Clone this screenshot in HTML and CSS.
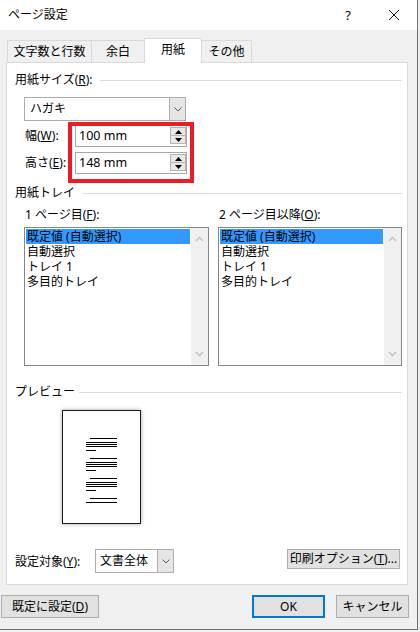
FILE: index.html
```html
<!DOCTYPE html>
<html lang="ja">
<head>
<meta charset="utf-8">
<title>ページ設定</title>
<link rel="stylesheet" href="styles.css">
</head>
<body>
<div class="dialog">
  <div class="titlebar">
    <span class="title">ページ設定</span>
    <span class="tb-btn help">?</span>
    <span class="tb-btn close"><svg width="12" height="12" viewBox="0 0 12 12"><path d="M1 1L11 11M11 1L1 11" stroke="#111" stroke-width="1" fill="none"/></svg></span>
  </div>

  <div class="tabs">
    <div class="tab t1">文字数と行数</div>
    <div class="tab t2">余白</div>
    <div class="tab t3 active">用紙</div>
    <div class="tab t4">その他</div>
  </div>

  <div class="panel">
    <div class="group-head"><span>用紙サイズ(<u>R</u>):</span><i class="rule"></i></div>
    <div class="indent">
      <div class="combo size-combo">
        <span class="combo-text">ハガキ</span>
        <span class="combo-btn"><svg width="8" height="5" viewBox="0 0 8 5"><path d="M0.5 0.5L4 4L7.5 0.5" stroke="#5a5a5a" fill="none"/></svg></span>
      </div>
      <div class="dims">
        <div class="dim-row">
          <span class="dim-label">幅(<u>W</u>):</span>
          <div class="spin">
            <span class="spin-text">100 mm</span>
            <span class="spin-btns">
              <span class="sb"><svg width="7" height="4" viewBox="0 0 7 4"><path d="M0 4L3.5 0L7 4Z" fill="#000"/></svg></span>
              <span class="sb"><svg width="7" height="4" viewBox="0 0 7 4"><path d="M0 0L3.5 4L7 0Z" fill="#000"/></svg></span>
            </span>
          </div>
        </div>
        <div class="dim-row">
          <span class="dim-label">高さ(<u>E</u>):</span>
          <div class="spin">
            <span class="spin-text">148 mm</span>
            <span class="spin-btns">
              <span class="sb"><svg width="7" height="4" viewBox="0 0 7 4"><path d="M0 4L3.5 0L7 4Z" fill="#000"/></svg></span>
              <span class="sb"><svg width="7" height="4" viewBox="0 0 7 4"><path d="M0 0L3.5 4L7 0Z" fill="#000"/></svg></span>
            </span>
          </div>
        </div>
        <div class="highlight"></div>
      </div>
    </div>

    <div class="group-head tray-head"><span>用紙トレイ</span><i class="rule"></i></div>
    <div class="lists">
      <div class="list-label">1 ページ目(<u>F</u>):</div>
      <div class="list-label">2 ページ目以降(<u>O</u>):</div>
      <div class="listbox">
        <div class="items">
          <div class="item sel">既定値 (自動選択)</div>
          <div class="item">自動選択</div>
          <div class="item">トレイ 1</div>
          <div class="item">多目的トレイ</div>
        </div>
        <div class="vscroll">
          <svg width="9" height="6" viewBox="0 0 9 6"><path d="M1 5L4.5 1.5L8 5" stroke="#c4c4c4" stroke-width="1.6" fill="none"/></svg>
          <svg width="9" height="6" viewBox="0 0 9 6"><path d="M1 1L4.5 4.5L8 1" stroke="#c4c4c4" stroke-width="1.6" fill="none"/></svg>
        </div>
      </div>
      <div class="listbox">
        <div class="items">
          <div class="item sel">既定値 (自動選択)</div>
          <div class="item">自動選択</div>
          <div class="item">トレイ 1</div>
          <div class="item">多目的トレイ</div>
        </div>
        <div class="vscroll">
          <svg width="9" height="6" viewBox="0 0 9 6"><path d="M1 5L4.5 1.5L8 5" stroke="#c4c4c4" stroke-width="1.6" fill="none"/></svg>
          <svg width="9" height="6" viewBox="0 0 9 6"><path d="M1 1L4.5 4.5L8 1" stroke="#c4c4c4" stroke-width="1.6" fill="none"/></svg>
        </div>
      </div>
    </div>

    <div class="group-head preview-head"><span>プレビュー</span><i class="rule"></i></div>
    <div class="page">
      <svg width="77" height="112" viewBox="1 1 77 112">
        <g stroke="#000" stroke-width="1">
          <path d="M28 28.5H55M24 32.5H55M24 34.5H55M24 36.5H55M24 40.5H34"/>
          <path d="M28 48.5H55M24 52.5H55M24 54.5H55M24 56.5H55M24 60.5H34"/>
          <path d="M28 68.5H55M24 72.5H55M24 74.5H55M24 76.5H55M24 80.5H34"/>
          <path d="M28 88.5H55M24 92.5H55"/>
        </g>
      </svg>
    </div>

    <div class="target-row">
      <span class="target-label">設定対象(<u>Y</u>):</span>
      <div class="combo target-combo">
        <span class="combo-text">文書全体</span>
        <span class="combo-btn"><svg width="8" height="5" viewBox="0 0 8 5"><path d="M0.5 0.5L4 4L7.5 0.5" stroke="#5a5a5a" fill="none"/></svg></span>
      </div>
      <button class="btn print-btn">印刷オプション(<u>T</u>)...</button>
    </div>
  </div>

  <div class="footer">
    <button class="btn default-btn">既定に設定(<u>D</u>)</button>
    <button class="btn ok-btn">OK</button>
    <button class="btn cancel-btn">キャンセル</button>
  </div>
</div>
</body>
</html>
```

FILE: styles.css
```css
* { box-sizing: border-box; }

html, body {
  margin: 0;
  padding: 0;
}

body {
  background: #f0f0f0;
  font-family: "Noto Sans", "Noto Sans CJK JP", sans-serif;
  font-size: 12px;
  color: #000;
  width: 420px;
  height: 632px;
  overflow: hidden;
}

u { text-decoration: underline; text-underline-offset: 1px; }

.dialog {
  width: 418px;
  height: 630px;
  background: #f0f0f0;
  border-right: 1px solid #707070;
  border-bottom: 1px solid #707070;
}

/* title bar */
.titlebar {
  height: 30px;
  background: #fff;
  display: flex;
  align-items: center;
  padding-left: 8px;
}
.title {
  flex: 1;
  font-size: 12px;
  line-height: 16px;
}
.tb-btn {
  width: 46px;
  height: 30px;
  display: flex;
  align-items: center;
  justify-content: center;
}
.help {
  font-size: 13px;
  line-height: 16px;
}

/* tabs */
.tabs {
  height: 32px;
  display: flex;
  align-items: flex-end;
  padding-left: 7px;
}
.tab {
  height: 22px;
  border: 1px solid #d9d9d9;
  border-bottom: none;
  background: #f0f0f0;
  display: flex;
  align-items: center;
  justify-content: center;
  line-height: 16px;
  margin-left: -1px;
}
.t1 { width: 85px; margin-left: 0; }
.t2 { width: 54px; }
.t3 { width: 58px; }
.t4 { width: 51px; }
.tab.active {
  height: 25px;
  margin-bottom: -1px;
  background: #fff;
  position: relative;
  z-index: 1;
  padding-bottom: 3px;
}

/* panel */
.panel {
  margin: 0 9px 0 6px;
  height: 523px;
  background: #fff;
  border: 1px solid #d9d9d9;
  padding: 9px 5px 0 8px;
}

.group-head {
  display: flex;
  align-items: center;
  height: 16px;
  line-height: 16px;
}
.rule {
  flex: 1;
  height: 1px;
  background: #dcdcdc;
  margin-left: 7px;
}
.tray-head { margin-top: 11px; }
.tray-head .rule { margin-left: 8px; }
.preview-head { margin-top: 18px; }
.preview-head .rule { margin-left: 4px; }

.indent { padding-left: 9px; }

/* combo boxes */
.combo {
  height: 24px;
  border: 1px solid #adadad;
  background: #fff;
  display: flex;
  align-items: stretch;
}
.combo-text {
  flex: 1;
  line-height: 22px;
  padding-left: 5px;
}
.combo-btn {
  width: 16px;
  background: #e5e5e5;
  border-left: 1px solid #adadad;
  display: flex;
  align-items: center;
  justify-content: center;
}
.size-combo {
  width: 162px;
  margin-top: 9px;
}

/* dimension rows */
.dims {
  position: relative;
  padding-top: 4px;
}
.dim-row {
  display: flex;
  align-items: center;
  height: 22px;
}
.dim-row + .dim-row { margin-top: 5px; }
.dim-label {
  width: 51px;
  padding-left: 1px;
  line-height: 16px;
}
.spin {
  width: 112px;
  height: 22px;
  border: 1px solid #a8a8a8;
  display: flex;
  align-items: flex-start;
}
.spin-text {
  flex: 1;
  line-height: 20px;
  padding-left: 3px;
  font-size: 12.5px;
}
.spin-btns {
  display: flex;
  flex-direction: column;
  margin-top: 1px;
  margin-right: 0;
  width: 16px;
}
.sb {
  height: 9px;
  border: 1px solid #b4b4b4;
  background: #e8e8e8;
  display: flex;
  align-items: center;
  justify-content: center;
}
.sb + .sb { margin-top: -1px; }

.highlight {
  position: absolute;
  left: 44px;
  top: 1px;
  width: 126px;
  height: 61px;
  border: 4px solid #ec1c24;
  pointer-events: none;
}

/* tray lists */
.lists {
  margin-top: 6px;
  margin-left: 9px;
  display: grid;
  grid-template-columns: 185px 184px;
  column-gap: 9px;
  row-gap: 4px;
}
.list-label {
  line-height: 16px;
  padding-left: 1px;
}
.listbox {
  height: 139px;
  border: 1px solid #828790;
  background: #fff;
  display: flex;
}
.items {
  flex: 1;
  padding: 1px;
}
.item {
  height: 15px;
  line-height: 15px;
  padding-left: 1px;
  white-space: nowrap;
}
.item.sel { background: #3399ff; }
.vscroll {
  width: 17px;
  background: #f0f0f0;
  display: flex;
  flex-direction: column;
  justify-content: space-between;
  align-items: center;
  padding: 8px 0 8px;
}

/* preview */
.page {
  margin-top: 10px;
  margin-left: 47px;
  width: 79px;
  height: 114px;
  border: 1px solid #1a1a1a;
  background: #fff;
  box-shadow: 0 0 4px rgba(0, 0, 0, 0.35);
}
.page svg { display: block; }

/* target row */
.target-row {
  margin-top: 25px;
  display: flex;
  align-items: flex-start;
}
.target-label {
  width: 80px;
  line-height: 16px;
  margin-top: 5px;
}
.target-combo {
  width: 79px;
}
.target-combo .combo-text { padding-left: 4px; }

.btn {
  font-family: inherit;
  font-size: 12px;
  color: #000;
  background: #e1e1e1;
  border: 1px solid #adadad;
  padding: 0;
  margin: 0;
  line-height: 16px;
}
.print-btn {
  margin-left: auto;
  margin-right: 2px;
  width: 113px;
  height: 20px;
}

/* footer */
.footer {
  margin-top: 10px;
  display: flex;
  padding-left: 1px;
}
.footer .btn { height: 23px; }
.default-btn { width: 98px; }
.ok-btn {
  width: 73px;
  margin-left: auto;
  border: 2px solid #0078d7;
}
.cancel-btn {
  width: 73px;
  margin-left: 11px;
  margin-right: 8px;
}
```
